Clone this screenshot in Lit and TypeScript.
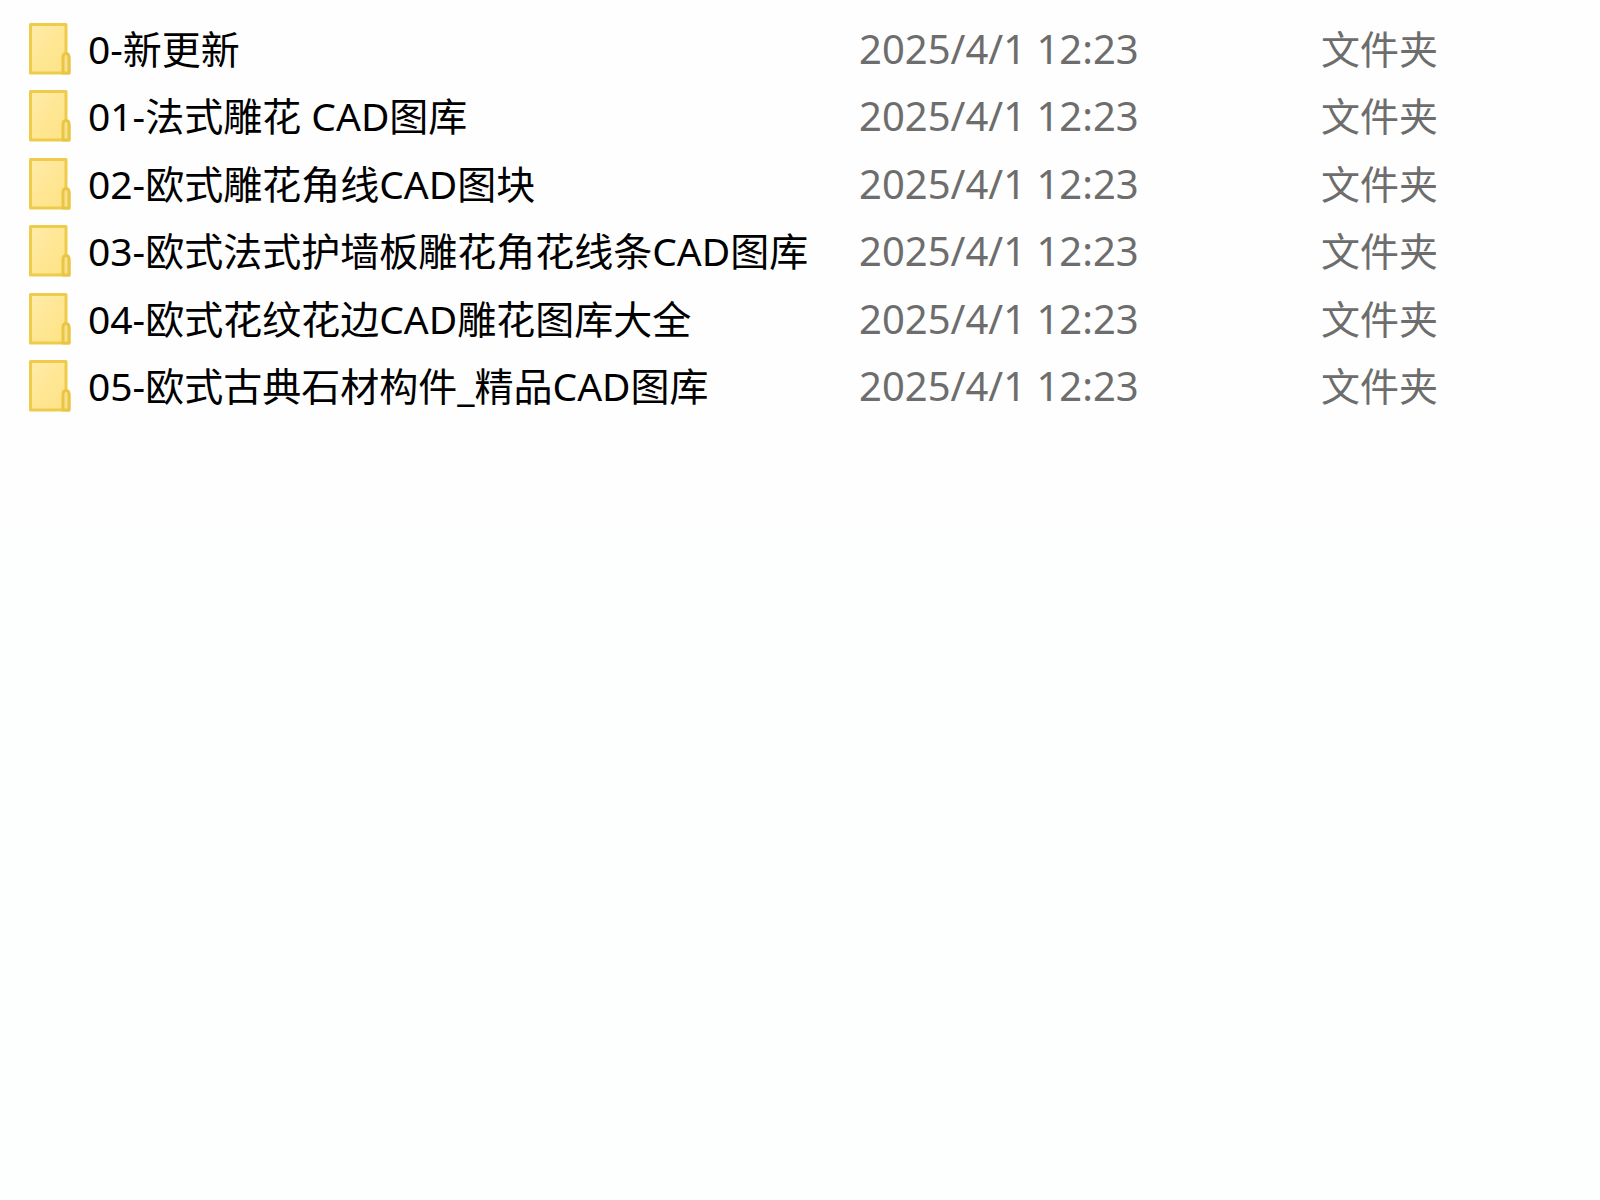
import { LitElement, html, css } from "lit";
import { customElement } from "lit/decorators.js";

interface Entry {
  name: string;
  modified: string;
  kind: string;
}

const folder = (name: string): Entry => ({
  name,
  modified: "2025/4/1 12:23",
  kind: "文件夹",
});

const ENTRIES: Entry[] = [
  folder("0-新更新"),
  folder("01-法式雕花 CAD图库"),
  folder("02-欧式雕花角线CAD图块"),
  folder("03-欧式法式护墙板雕花角花线条CAD图库"),
  folder("04-欧式花纹花边CAD雕花图库大全"),
  folder("05-欧式古典石材构件_精品CAD图库"),
];

@customElement("folder-icon")
export class FolderIcon extends LitElement {
  static styles = css`
    :host {
      display: block;
      flex: none;
    }
    .icon {
      display: block;
    }
  `;

  render() {
    return html`
      <svg class="icon" width="44" height="54" viewBox="0 0 44 54" aria-hidden="true">
        <defs>
          <linearGradient id="face" x1="0" y1="0" x2="1" y2="1">
            <stop offset="0" stop-color="#ffecac" />
            <stop offset="0.5" stop-color="#ffe693" />
            <stop offset="1" stop-color="#fde284" />
          </linearGradient>
        </defs>
        <path
          d="M2.5 2.5H38V31.5Q41 32 41 36V51H2.5Z"
          fill="url(#face)"
          stroke="#eecb4a"
          stroke-width="3"
          stroke-linejoin="round"
        />
        <path
          d="M35 51V36Q35 31.5 38 31.5Q41 31.5 41 36V51Z"
          fill="#fbe08a"
          stroke="#e9c544"
          stroke-width="3"
          stroke-linejoin="round"
        />
      </svg>
    `;
  }
}

@customElement("app-root")
export class AppRoot extends LitElement {
  static styles = css`
    :host {
      display: flex;
      flex-direction: column;
      min-height: 100vh;
      background: #fcfffe;
      font-family: "Noto Sans", "Noto Sans CJK SC", sans-serif;
      font-size: 39px;
      line-height: 48px;
      color: #000;
    }
    .pane {
      box-sizing: border-box;
      padding: 15px 0 113px;
      background: #fefefe;
    }
    .files {
      width: 100%;
      table-layout: fixed;
      border-collapse: collapse;
    }
    .modified-col {
      width: 462px;
    }
    .kind-col {
      width: 279px;
    }
    .row {
      height: 67px;
    }
    .row:nth-child(even) {
      height: 68px;
    }
    .cell {
      padding: 0;
      text-align: left;
      font-weight: 400;
      white-space: nowrap;
      vertical-align: middle;
    }
    .label {
      display: flex;
      align-items: center;
      gap: 16px;
      padding-left: 28px;
    }
    .detail {
      color: #6d6d6d;
    }
    .modified {
      font-size: 40px;
    }
  `;

  render() {
    return html`
      <main class="pane">
        <table class="files">
          <colgroup>
            <col />
            <col class="modified-col" />
            <col class="kind-col" />
          </colgroup>
          <tbody>
            ${ENTRIES.map(
              (entry) => html`
                <tr class="row">
                  <th class="cell" scope="row">
                    <div class="label">
                      <folder-icon></folder-icon>
                      <span>${entry.name}</span>
                    </div>
                  </th>
                  <td class="cell detail modified">${entry.modified}</td>
                  <td class="cell detail">${entry.kind}</td>
                </tr>
              `,
            )}
          </tbody>
        </table>
      </main>
    `;
  }
}
